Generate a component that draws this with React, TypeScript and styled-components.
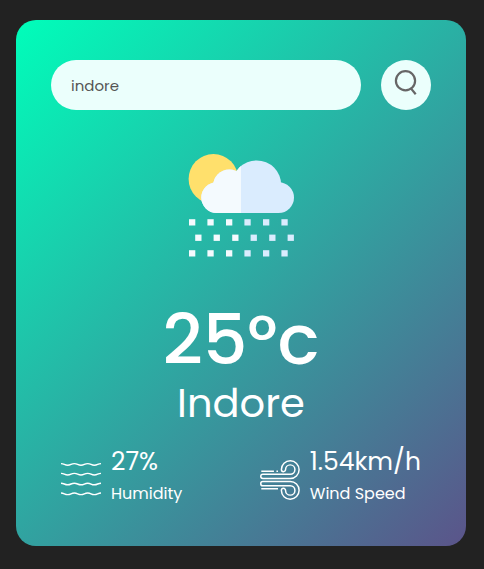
import React from "react";
import styled, { createGlobalStyle } from "styled-components";

const GlobalStyle = createGlobalStyle`
  * { margin: 0; padding: 0; box-sizing: border-box; font-family: Poppins, Inter, sans-serif; }
  body { background: #222; }
`;

const Card = styled.main`
  width: 450px;
  height: 526px;
  margin: 20px 0 0 16px;
  padding: 40px 35px;
  border-radius: 20px;
  color: #fff;
  background: linear-gradient(135deg, #00feba, #5b548a);
`;

const Search = styled.form`
  display: flex;
  justify-content: space-between;
`;

const SearchInput = styled.input`
  width: 310px;
  height: 50px;
  padding: 0 20px;
  border: 0;
  outline: 0;
  border-radius: 30px;
  background: #ebfffc;
  color: #555;
  font-size: 15px;
`;

const SearchButton = styled.button`
  display: flex;
  justify-content: center;
  align-items: flex-start;
  width: 50px;
  height: 50px;
  padding-top: 8px;
  border: 0;
  border-radius: 50%;
  background: #ebfffc;
`;

const Weather = styled.section`
  display: flex;
  flex-direction: column;
  align-items: center;
  padding-top: 35px;
`;

const Temperature = styled.h1`
  height: 82px;
  margin-top: 33px;
  font-size: 70px;
  line-height: 84px;
  font-weight: 500;
`;

const City = styled.h2`
  height: 50px;
  font-size: 40px;
  line-height: 46px;
  font-weight: 400;
`;

const Details = styled.section`
  display: flex;
  justify-content: space-between;
  padding: 13px 10px 0;
`;

const Detail = styled.div<{ $width: number }>`
  display: flex;
  align-items: center;
  gap: 10px;
  width: ${(p) => p.$width}px;
  white-space: nowrap;

  svg { margin-top: 10px; }
`;

const Value = styled.p`
  height: 37px;
  font-size: 25px;
  line-height: 37px;
`;

const Label = styled.p`
  height: 27px;
  font-size: 16px;
  line-height: 27px;
`;

const columns = [189, 207.4, 226, 244.4, 263, 281.4];
const rows = [
  { y: 219.2, shift: 0 },
  { y: 234.6, shift: 6.2 },
  { y: 250.2, shift: 0 },
];

const RainIcon = () => (
  <svg width="124" height="120" viewBox="179 145 124 120">
    <defs>
      <clipPath id="cloudLeft"><rect x="180" y="145" width="61" height="120" /></clipPath>
      <g id="cloud">
        <circle cx="216.7" cy="197.6" r="15.4" />
        <circle cx="229.3" cy="185.8" r="16.2" />
        <circle cx="256.7" cy="184.9" r="24.5" />
        <circle cx="278.6" cy="197.6" r="15.4" />
        <path d="M216.7 190h62v23h-62z" />
      </g>
    </defs>
    <circle cx="213.4" cy="178.9" r="24.8" fill="#ffe06c" />
    <use href="#cloud" fill="#daecfe" />
    <use href="#cloud" fill="#f4fafe" clipPath="url(#cloudLeft)" />
    {rows.map((r) =>
      columns.map((x) => (
        <rect key={`${r.y}-${x}`} x={x + r.shift} y={r.y} width="6.3" height="6.3" fill={x + r.shift > 240 ? "#daecfe" : "#f4fafe"} />
      ))
    )}
  </svg>
);

const SearchIcon = () => (
  <svg width="24" height="28" viewBox="394 67.5 24 28" fill="none" stroke="#666" strokeWidth="2.2">
    <circle cx="405.5" cy="80.2" r="9.6" />
    <path d="M410.7 87.6l5 6.2" />
  </svg>
);

const wave = "c3.3 0 3.4 1.6 6.7 1.6s3.3-1.6 6.6-1.6 3.4 1.6 6.7 1.6 3.3-1.6 6.7-1.6 3.3 1.6 6.6 1.6 3.4-1.6 6.7-1.6";

const HumidityIcon = () => (
  <svg width="40" height="40" viewBox="0 0 40 40" fill="none" stroke="#fff" strokeWidth="1.4">
    {[3.6, 13.4, 23.2, 33].map((y) => (
      <path key={y} d={`M0 ${y}${wave}`} />
    ))}
  </svg>
);

const gust = "M290.4 477.9H262.9a2.15 2.15 0 0 1 0-4.3h27.5a4.7 4.7 0 1 0-4.7-4.7a2.1 2.1 0 0 1-4.2 0a8.9 8.9 0 1 1 8.9 9z";

const WindIcon = () => (
  <svg width="40" height="40" viewBox="260 459.4 40 40" fill="none" stroke="#fff" strokeWidth="1.5">
    <path d={gust} />
    <path d={gust} transform="matrix(1 0 0 -1 0 958.8)" />
    <path d="M261.3 470.5H274M276.5 470.5h1.6M261.3 488.3h16.8" />
  </svg>
);

export default function App() {
  return (
    <>
      <GlobalStyle />
      <Card>
        <Search>
          <SearchInput defaultValue="indore" spellCheck={false} />
          <SearchButton type="button" aria-label="Search"><SearchIcon /></SearchButton>
        </Search>
        <Weather>
          <RainIcon />
          <Temperature>25°c</Temperature>
          <City>Indore</City>
        </Weather>
        <Details>
          <Detail $width={130}>
            <HumidityIcon />
            <div><Value>27%</Value><Label>Humidity</Label></div>
          </Detail>
          <Detail $width={161}>
            <WindIcon />
            <div><Value>1.54km/h</Value><Label>Wind Speed</Label></div>
          </Detail>
        </Details>
      </Card>
    </>
  );
}
